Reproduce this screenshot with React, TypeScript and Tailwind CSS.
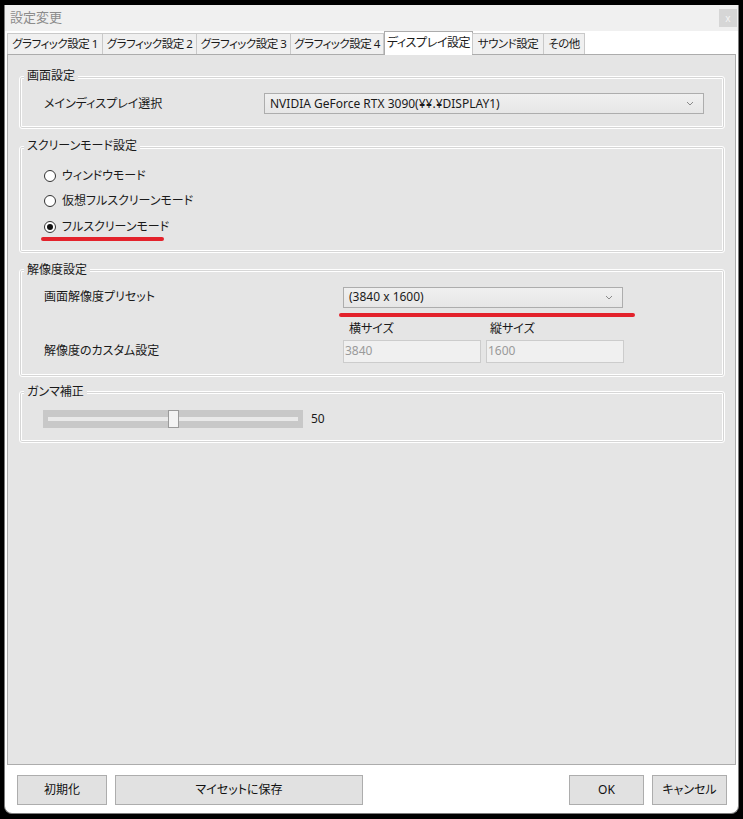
import React from "react";

const tabs = [
  { label: "グラフィック設定 1", w: "w-[96px]" },
  { label: "グラフィック設定 2", w: "w-[95px]" },
  { label: "グラフィック設定 3", w: "w-[95px]" },
  { label: "グラフィック設定 4", w: "w-[94px]" },
  { label: "ディスプレイ設定", w: "w-[89px]", active: true },
  { label: "サウンド設定", w: "w-[72px]" },
  { label: "その他", w: "w-[42px]" },
];

function Chevron() {
  return (
    <svg width="8" height="5" viewBox="0 0 8 5" className="shrink-0">
      <path d="M1 1 L4 4 L7 1" fill="none" stroke="#8a8a8a" strokeWidth="1" />
    </svg>
  );
}

function Select({ value, className }: { value: string; className: string }) {
  return (
    <div
      className={`flex h-[21px] items-center justify-between border border-[#adadad] bg-gradient-to-b from-[#f0f0f0] to-[#e6e6e6] pl-[5px] pr-[9px] ${className}`}
    >
      <span className="text-[12px] leading-none text-[#1a1a1a]">{value}</span>
      <Chevron />
    </div>
  );
}

function Group({
  title,
  children,
  className = "",
}: {
  title: string;
  children: React.ReactNode;
  className?: string;
}) {
  return (
    <fieldset
      className={`rounded-[3px] border border-white shadow-[inset_0_0_0_1px_#d6d6d6,inset_0_0_0_2px_#ffffff] ${className}`}
    >
      <legend className="ml-[4px] bg-[#e5e5e5] px-[3px] text-[12px] leading-[16px] text-[#1a1a1a]">
        {title}
      </legend>
      {children}
    </fieldset>
  );
}

function Radio({ label, checked }: { label: string; checked?: boolean }) {
  return (
    <div className="relative flex h-[25.5px] items-center pl-[24px]">
      <span className="flex h-[12px] w-[12px] items-center justify-center rounded-full border border-[#333] bg-white">
        {checked && <span className="h-[6px] w-[6px] rounded-full bg-[#111]" />}
      </span>
      <span className="ml-[6px] text-[12px] text-[#1a1a1a]">{label}</span>
    </div>
  );
}

export default function App() {
  return (
    <div className="h-[819px] w-[743px] bg-black pb-[5px] pl-[4px] pr-[4px] pt-[5px] font-['Noto_Sans','Noto_Sans_CJK_JP',sans-serif] [font-feature-settings:'palt']">
      <div className="flex h-full flex-col overflow-hidden rounded-b-[8px] border-x border-b border-[#7d7d7d] bg-white">
        {/* title bar */}
        <div className="flex h-[26px] shrink-0 items-center justify-between bg-[#f0f0f0] pl-[5px] pr-[1px]">
          <span className="text-[13px] text-[#8c8c8c]">設定変更</span>
          <div className="flex h-[18px] w-[18px] items-center justify-center bg-[#d6d6d6] text-[10px] leading-none text-[#f4f4f4]">
            x
          </div>
        </div>

        {/* tabs */}
        <div className="relative z-10 flex h-[23px] shrink-0 items-end pl-[2px]">
          {tabs.map((t) =>
            t.active ? (
              <div
                key={t.label}
                className={`${t.w} -mb-[1px] flex h-[24px] items-start justify-center whitespace-nowrap border border-b-0 border-[#acacac] bg-white pt-[2px] text-[12px] tracking-[-0.4px] text-[#1a1a1a]`}
              >
                {t.label}
              </div>
            ) : (
              <div
                key={t.label}
                className={`${t.w} -ml-[1px] flex h-[21px] items-center justify-center whitespace-nowrap border border-b-0 border-[#c9c9c9] bg-[#f0f0f0] text-[11.5px] tracking-[-0.5px] text-[#1a1a1a] first:ml-0`}
              >
                {t.label}
              </div>
            )
          )}
        </div>

        {/* panel */}
        <div className="mx-[2px] flex h-[711px] shrink-0 flex-col border border-[#acacac] bg-[#e5e5e5] pl-[11px] pr-[10px] pt-[13px]">
          <Group title="画面設定" className="pb-[14px] pt-[9px]">
            <div className="flex items-center">
              <div className="w-[244px] pl-[24px] text-[12px] text-[#1a1a1a]">メインディスプレイ選択</div>
              <Select value="NVIDIA GeForce RTX 3090(¥¥.¥DISPLAY1)" className="w-[440px]" />
            </div>
          </Group>

          <Group title="スクリーンモード設定" className="mt-[9px] pb-[12px] pt-[9px]">
            <Radio label="ウィンドウモード" />
            <Radio label="仮想フルスクリーンモード" />
            <div className="relative">
              <Radio label="フルスクリーンモード" checked />
              <div className="absolute left-[21px] top-[23px] h-[4px] w-[123px] rounded-full bg-[#e3222b]" />
            </div>
          </Group>

          <Group title="解像度設定" className="mt-[9px] pb-[13px] pt-[9px]">
            <div className="relative flex items-center">
              <div className="w-[323px] pl-[24px] text-[12px] text-[#1a1a1a]">画面解像度プリセット</div>
              <Select value="(3840 x 1600)" className="w-[280px]" />
              <div className="absolute left-[319px] top-[26px] h-[4px] w-[296px] rounded-full bg-[#e3222b]" />
            </div>
            <div className="mt-[13px] flex pl-[329px] text-[12px] leading-[16px] text-[#1a1a1a]">
              <span className="w-[141px]">横サイズ</span>
              <span>縦サイズ</span>
            </div>
            <div className="mt-[3px] flex items-center">
              <div className="w-[323px] pl-[24px] text-[12px] text-[#1a1a1a]">解像度のカスタム設定</div>
              <div className="flex h-[23px] w-[138px] items-center border border-[#cccccc] bg-[#f0f0f0] pl-[1px] text-[12px] text-[#9a9a9a]">
                3840
              </div>
              <div className="ml-[5px] flex h-[23px] w-[138px] items-center border border-[#cccccc] bg-[#f0f0f0] pl-[1px] text-[12px] text-[#9a9a9a]">
                1600
              </div>
            </div>
          </Group>

          <Group title="ガンマ補正" className="mt-[7px] pb-[14px] pt-[10px]">
            <div className="flex items-center pl-[23px]">
              <div className="relative flex h-[18px] w-[260px] items-center bg-[#c8c8c8] px-[5px]">
                <div className="h-[4px] w-full bg-[#e9e9e9]" />
                <div className="absolute left-[125px] top-0 h-[18px] w-[11px] border border-[#9a9a9a] bg-[#f3f3f3]" />
              </div>
              <span className="ml-[8px] text-[12px] text-[#1a1a1a]">50</span>
            </div>
          </Group>
        </div>

        {/* footer */}
        <div className="flex flex-1 items-start pl-[12px] pr-[11px] pt-[10px]">
          <button className="flex h-[30px] w-[90px] items-center justify-center border border-[#adadad] bg-[#e1e1e1] text-[12px] text-[#111]">
            初期化
          </button>
          <button className="ml-[8px] flex h-[30px] w-[248px] items-center justify-center border border-[#adadad] bg-[#e1e1e1] text-[12px] text-[#111]">
            マイセットに保存
          </button>
          <div className="flex-1" />
          <button className="flex h-[30px] w-[75px] items-center justify-center border border-[#adadad] bg-[#e1e1e1] text-[12px] text-[#111]">
            OK
          </button>
          <button className="ml-[8px] flex h-[30px] w-[75px] items-center justify-center border border-[#adadad] bg-[#e1e1e1] text-[12px] text-[#111]">
            キャンセル
          </button>
        </div>
      </div>
    </div>
  );
}
